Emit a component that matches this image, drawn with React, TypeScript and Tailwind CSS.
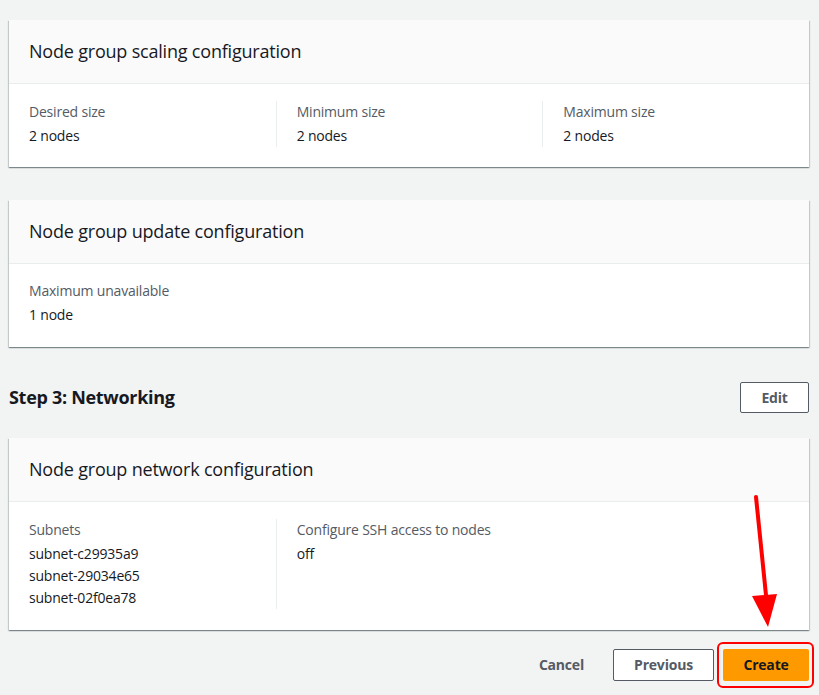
import React from "react";

const font = { fontFamily: '"Open Sans", "Noto Sans", Arial, sans-serif' };

export default function App() {
  return (
    <div style={font} className="relative h-[695px] w-[819px] overflow-hidden bg-[#f2f3f3] pl-[9px] pt-[20px] tracking-[-0.2px] text-[#16191f]">
      <Card title="Node group scaling configuration">
        <div className="grid grid-cols-3 pt-[17px] pb-[20px]">
          <Col first label="Desired size" values={["2 nodes"]} />
          <Col label="Minimum size" values={["2 nodes"]} />
          <Col label="Maximum size" values={["2 nodes"]} />
        </div>
      </Card>

      <div className="mt-[33px]">
        <Card title="Node group update configuration">
          <div className="px-[20px] pt-[16px] pb-[21px]">
            <div className="text-[14px] leading-[22px] text-[#545b64]">Maximum unavailable</div>
            <div className="mt-[2px] text-[14px] leading-[22px]">1 node</div>
          </div>
        </Card>
      </div>

      <div className="mt-[35px] flex h-[31px] w-[800px] items-center justify-between">
        <h2 className="pb-[2px] text-[18px] font-bold leading-[24px] tracking-[-0.3px]">Step 3: Networking</h2>
        <button className="h-[31px] w-[69px] rounded-[2px] border border-[#545b64] bg-white text-[14px] font-bold text-[#545b64]">Edit</button>
      </div>

      <div className="mt-[25px]">
        <Card title="Node group network configuration">
          <div className="grid grid-cols-3 pt-[17px] pb-[21px]">
            <Col first label="Subnets" values={["subnet-c29935a9", "subnet-29034e65", "subnet-02f0ea78"]} />
            <Col label="Configure SSH access to nodes" values={["off"]} />
            <div />
          </div>
        </Card>
      </div>

      <div className="mt-[19px] flex w-[800px] items-center justify-end gap-[9px]">
        <button className="h-[32px] px-[20px] pb-[2px] text-[14px] font-bold text-[#545b64]">Cancel</button>
        <button className="h-[32px] w-[101px] rounded-[2px] border border-[#545b64] bg-white pb-[2px] text-[14px] font-bold text-[#545b64]">Previous</button>
        <button className="h-[32px] w-[86px] rounded-[2px] bg-[#ff9900] pb-[2px] text-[14px] font-bold text-[#16191f]">Create</button>
      </div>

      {/* annotation */}
      <div className="absolute left-[717px] top-[642px] h-[46px] w-[97px] rounded-[6px] border-2 border-[#ff0000]" />
      <svg className="absolute left-0 top-0" width="819" height="695">
        <line x1="756" y1="497" x2="767" y2="605" stroke="#ff0000" strokeWidth="4" strokeLinecap="round" />
        <polygon points="752,596 777,594 768,627" fill="#ff0000" />
      </svg>
    </div>
  );
}

function Card({ title, children }: { title: string; children: React.ReactNode }) {
  return (
    <section className="w-[800px] bg-white shadow-[0_1px_1px_0_rgba(0,28,36,0.3),1px_1px_1px_0_rgba(0,28,36,0.15),-1px_1px_1px_0_rgba(0,28,36,0.15)]">
      <div className="flex h-[64px] items-center border-b border-[#eaeded] bg-[#fafafa] px-[20px] pb-[2px]">
        <h2 className="text-[18px] leading-[24px]">{title}</h2>
      </div>
      {children}
    </section>
  );
}

function Col({ label, values, first }: { label: string; values: string[]; first?: boolean }) {
  return (
    <div className={first ? "pl-[20px]" : "border-l border-[#eaeded] pl-[20px]"}>
      <div className="text-[14px] leading-[22px] text-[#545b64]">{label}</div>
      <div className="mt-[2px]">
        {values.map((v) => (
          <div key={v} className="text-[14px] leading-[22px]">{v}</div>
        ))}
      </div>
    </div>
  );
}
